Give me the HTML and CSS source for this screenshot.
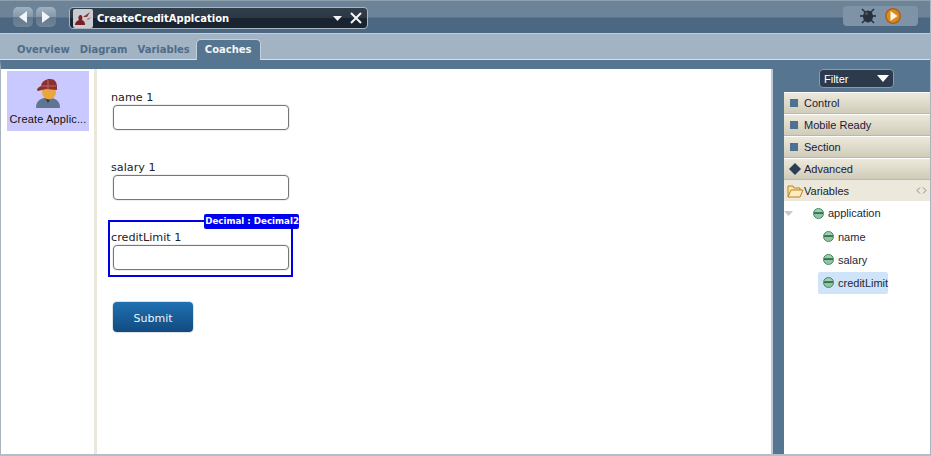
FILE: index.html
```html
<!DOCTYPE html>
<html lang="en">
<head>
<meta charset="utf-8">
<title>CreateCreditApplcation</title>
<link rel="stylesheet" href="styles.css">
</head>
<body>
<div class="app">
  <header class="topbar">
    <div class="nav">
      <button class="nav-btn"><svg width="14" height="16" viewBox="0 0 14 16"><path d="M11 2v12L3 8z" fill="#f2f5f7"/></svg></button>
      <button class="nav-btn"><svg width="14" height="16" viewBox="0 0 14 16"><path d="M3 2v12l8-6z" fill="#f2f5f7"/></svg></button>
    </div>
    <div class="doc">
      <span class="doc-icon"><svg width="18" height="16" viewBox="0 0 18 16"><path d="M1 15c0-3 2-4 4-5-1-1-1-4 1-5 2 0 3 2 2 5 2 1 3 2 3 5z" fill="#7a1f22"/><path d="M9 7l7-5-3 5-2 0z" fill="#8c2f30"/><path d="M13 9l4-2-3 3z" fill="#a65050"/></svg></span>
      <span class="doc-title">CreateCreditApplcation</span>
      <svg class="doc-caret" width="9" height="5" viewBox="0 0 9 5"><path d="M0 0h9L4.500 5z" fill="#f0f2f4"/></svg>
      <svg class="doc-close" width="12" height="12" viewBox="0 0 12 12"><path d="M1 1l10 10M11 1L1 11" stroke="#f4f6f8" stroke-width="2"/></svg>
    </div>
    <div class="run">
      <svg width="16" height="16" viewBox="0 0 16 16"><g stroke="#1f2b36" stroke-width="1.400" fill="none"><path d="M2 1l4 4M14 1l-4 4M0 8h5M16 8h-5M2 15l4-4M14 15l-4-4"/></g><ellipse cx="8" cy="8.500" rx="5" ry="6" fill="#26323e"/><circle cx="6.500" cy="5.500" r="1.500" fill="#4a5a68"/></svg>
      <svg width="16" height="16" viewBox="0 0 16 16"><circle cx="8" cy="8" r="8" fill="#a9641a"/><circle cx="8" cy="8" r="6.500" fill="#d98a24"/><path d="M5.500 3v10l7-5z" fill="#fff4dc"/></svg>
    </div>
  </header>
  <nav class="tabs">
    <span class="tab">Overview</span>
    <span class="tab">Diagram</span>
    <span class="tab">Variables</span>
    <span class="tab tab-active">Coaches</span>
  </nav>
  <main class="workspace">
    <aside class="coach-list">
      <div class="coach-item">
        <svg width="26" height="30" viewBox="0 0 26 30">
          <path d="M1 29c0-6 3-9 8-10h8c5 1 8 4 8 10z" fill="#5f7692"/>
          <path d="M10 19l3 5 3-5z" fill="#2d3a4a"/>
          <ellipse cx="14" cy="13" rx="7" ry="7.500" fill="#eaa63f"/>
          <path d="M6 7c1-5 5-7 9-7 5 0 7 3 7 8v3l-11-1-8 2c-2-1-1-3 3-5z" fill="#8e2f2f"/>
          <path d="M6 7h15M13 1v9" stroke="#bb6a60"/>
        </svg>
        <span class="coach-label">Create Applic...</span>
      </div>
    </aside>
    <section class="canvas">
      <div class="field">
        <label class="field-label">name 1</label>
        <input class="field-input" type="text">
      </div>
      <div class="field">
        <label class="field-label">salary 1</label>
        <input class="field-input" type="text">
      </div>
      <div class="field field-selected">
        <span class="badge">Decimal : Decimal2</span>
        <label class="field-label">creditLimit 1</label>
        <input class="field-input" type="text">
      </div>
      <button class="submit">Submit</button>
    </section>
    <aside class="palette">
      <div class="filter-row">
        <div class="filter"><span>Filter</span><svg width="12" height="7" viewBox="0 0 12 7"><path d="M0 0h12L6 7z" fill="#fff"/></svg></div>
      </div>
      <div class="panel">
        <div class="drawer"><span class="square"></span>Control</div>
        <div class="drawer"><span class="square"></span>Mobile Ready</div>
        <div class="drawer"><span class="square"></span>Section</div>
        <div class="drawer"><svg class="diamond" width="12" height="12" viewBox="0 0 12 12"><path d="M6 0l6 6-6 6-6-6z" fill="#2a3f57"/></svg>Advanced</div>
        <div class="vars-head">
          <svg width="17" height="14" viewBox="0 0 17 14"><path d="M1 13V2h5l1 2h6v2" fill="#fbe3a6" stroke="#b5832c"/><path d="M1 13l3-7h12l-3 7z" fill="#fdecc0" stroke="#b5832c"/></svg>
          <span>Variables</span>
          <svg class="arrows" width="11" height="7" viewBox="0 0 11 7"><path d="M4 .5L1 3.500l3 3M7 .5l3 3-3 3" fill="none" stroke="#8a8a86"/></svg>
        </div>
        <ul class="tree">
          <li class="tree-row tree-root">
            <svg class="twisty" width="9" height="5" viewBox="0 0 9 5"><path d="M0 0h9L4.500 5z" fill="#c6c8ca"/></svg>
            <span class="dot"></span>application
          </li>
          <li class="tree-row tree-child"><span class="dot"></span>name</li>
          <li class="tree-row tree-child"><span class="dot"></span>salary</li>
          <li class="tree-row tree-child"><span class="tree-sel"><span class="dot"></span>creditLimit</span></li>
        </ul>
      </div>
    </aside>
  </main>
</div>
</body>
</html>
```

FILE: styles.css
```css
* { box-sizing: border-box; }
html, body { margin: 0; padding: 0; }
body { width: 931px; height: 456px; overflow: hidden; background: #fff; font-family: "DejaVu Sans", sans-serif; }
.app { width: 931px; height: 456px; display: flex; flex-direction: column; border-bottom: 2px solid #b4bec8; border-right: 1px solid #a8b4c0; }

.topbar { height: 33px; flex: none; display: flex; align-items: flex-start; padding: 6px 12px 0 13px; border-top: 1px solid #8e9fae; background: linear-gradient(#6c8398 0, #6c8398 16px, #4c6781 17px, #4c6781 100%); }
.nav { display: flex; gap: 3px; }
.nav-btn { width: 20px; height: 20px; padding: 0; border: 0; border-radius: 5px; display: flex; align-items: center; justify-content: center; background: linear-gradient(#a3b2bf, #8398aa 50%, #64798d 51%, #6f8497); }
.doc { margin-left: 13px; width: 299px; height: 22px; display: flex; align-items: center; border: 1px solid #a9b6c2; border-radius: 4px; padding: 0 4px 0 3px; background: linear-gradient(#303e4a, #2c3844 50%, #1a2430 51%, #1a2430); }
.doc-icon { width: 20px; height: 19px; display: flex; align-items: center; justify-content: center; background: #c8ccd0; border-radius: 2px; }
.doc-title { margin-left: 4px; font: bold 10px "DejaVu Sans", sans-serif; color: #fff; flex: 1; }
.doc-caret { margin-right: 8px; }
.doc-close { margin-right: 1px; }
.run { margin: -1px 0 0 auto; width: 75px; height: 20px; border-radius: 4px; display: flex; align-items: center; justify-content: flex-end; gap: 9px; padding-right: 17px; background: #7f93a6; }

.tabs { height: 27px; flex: none; display: flex; align-items: flex-end; padding-left: 17px; gap: 10px; background: #a2b3c3; border-top: 1px solid #c4ced8; box-shadow: inset 0 -1px 0 #d8dfe6; }
.tab { font: bold 10px/21px "DejaVu Sans", sans-serif; color: #4f6c88; height: 21px; }
.tab-active { height: 21px; margin-left: -4px; padding: 0 8px; color: #f2f5f8; background: #557590; border: 1px solid #c4d0da; border-bottom: 0; border-radius: 5px 5px 0 0; line-height: 20px; }

.workspace { flex: 1; min-height: 0; display: flex; border-top: 9px solid #557590; border-left: 1px solid #a8b4c0; }
.coach-list { width: 96px; flex: none; padding: 2px 0 0 5px; border-right: 3px solid #ebe8db; background: #fff; border-left: 1px solid #fff; }
.coach-item { width: 82px; height: 60px; background: #c9c9ff; display: flex; flex-direction: column; align-items: center; padding-top: 8px; }
.coach-label { margin-top: 4px; font: 11px/13px "Liberation Sans", sans-serif; letter-spacing: .15px; color: #111; white-space: nowrap; }

.canvas { flex: 1; min-width: 0; padding: 21px 0 0 11px; background: #fff; display: flex; flex-direction: column; align-items: flex-start; }
.field { width: 185px; height: 40px; padding: 0 3px; position: relative; margin-bottom: 30px; }
.field-selected { margin-top: -10px; margin-bottom: 25px; height: 57px; padding: 8px 3px 0 3px; border: 2px solid #0000e6; }
.field-label { display: block; height: 15px; font-size: 11.200px; line-height: 15px; color: #222; }
.field-input { display: block; width: 176px; height: 25px; margin-left: 2px; border: 1px solid #777; border-radius: 4px; background: #fff; box-shadow: 0 0 0 1px #eee; }
.field-selected .field-input { margin-left: 0; }
.field-selected .field-label { margin-left: -2px; }
.badge { position: absolute; top: -8px; right: -8px; height: 15px; padding: 0 0 0 1px; border-radius: 2px; background: #0000f0; color: #fff; font: bold 8.700px/15px "DejaVu Sans", sans-serif; white-space: nowrap; }
.submit { margin-left: 5px; width: 80px; height: 30px; padding: 3px 0 0; border: 0; border-radius: 4px; background: linear-gradient(#1f71b2, #124a80); box-shadow: 0 0 0 1px #dde2e6; color: #eef4fa; font: 11px "DejaVu Sans", sans-serif; }

.palette { width: 159px; flex: none; display: flex; flex-direction: column; background: #557590; border-left: 2px solid #bcc8d4; }
.filter-row { height: 23px; flex: none; padding-left: 46px; display: flex; align-items: flex-start; }
.filter { width: 75px; height: 19px; display: flex; align-items: center; justify-content: space-between; padding: 0 4px; background: #2c3a4c; border: 1px solid #8c9aa8; border-radius: 4px; color: #fff; font: 11px "Liberation Sans", sans-serif; }
.panel { flex: 1; margin-left: 11px; background: #fff; font-family: "Liberation Sans", sans-serif; }
.drawer { height: 22px; display: flex; align-items: center; padding-left: 6px; gap: 6px; font-size: 11px; color: #1a1a3a; background: linear-gradient(#ece9dc, #d0ccb9); border-top: 1px solid #fff; border-bottom: 1px solid #bbb8a8; }
.square { width: 8px; height: 8px; background: #4f7091; }
.diamond { margin: 0 -3px 0 -1px; }
.vars-head { height: 21px; display: flex; align-items: center; padding: 0 3px; background: #ece9dc; font-size: 11px; color: #1a1a2a; }
.vars-head span { flex: 1; }
.tree { list-style: none; margin: 0; padding: 0; font-size: 11px; color: #1a2a3a; }
.tree-row { height: 23px; display: flex; align-items: center; white-space: nowrap; }
.tree-root { height: 24px; }
.twisty { margin-right: 20px; }
.tree-child { padding-left: 39px; }
.tree-sel { margin-left: -5px; padding-left: 5px; width: 70px; height: 22px; display: flex; align-items: center; background: #cfe3f9; border-radius: 2px; }
.dot { width: 11px; height: 11px; margin-right: 4px; flex: none; border-radius: 50%; border: 1px solid #3b8a5c; background: linear-gradient(#9ccfae 0, #9ccfae 38%, #3f6e52 39%, #3f6e52 60%, #8fc4a4 61%); }
```
